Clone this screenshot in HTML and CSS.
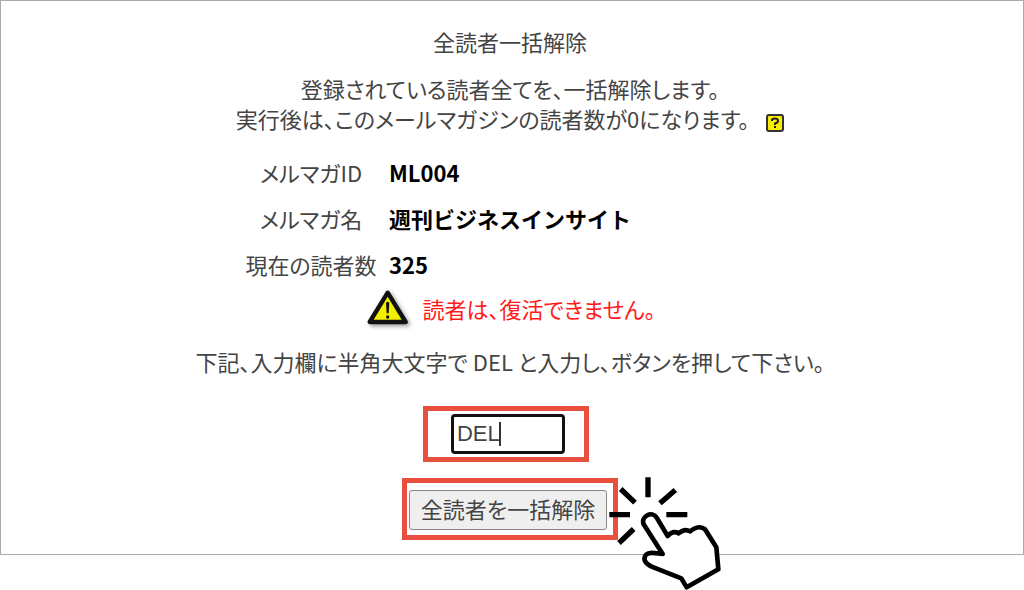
FILE: index.html
```html
<!DOCTYPE html>
<html lang="ja">
<head>
    <meta charset="UTF-8">
    <meta name="viewport" content="width=device-width, initial-scale=1.0">
    <title>全読者一括解除</title>
    <link rel="stylesheet" href="styles.css">
</head>
<body>
    <main class="panel">
        <h1 class="title">全読者一括解除</h1>
        <p class="lead">
            登録されている読者全てを、一括解除します。<br>
            実行後は、このメールマガジンの読者数が0になります。
            <a href="#" class="help" aria-label="ヘルプ">
                <svg viewBox="0 0 18 18" width="18" height="18" aria-hidden="true">
                    <rect x="1" y="1" width="16" height="16" rx="2" fill="#f8ee00" stroke="#333" stroke-width="2"/>
                    <path d="M6 7V5.500Q6.500 4.500 9 4.500T12 6.500T9 9.500V11" fill="none" stroke="#222" stroke-width="2"/>
                    <rect x="8" y="12" width="2" height="2" fill="#222"/>
                </svg>
            </a>
        </p>

        <dl class="info">
            <dt>メルマガID</dt>
            <dd>ML004</dd>
            <dt>メルマガ名</dt>
            <dd>週刊ビジネスインサイト</dd>
            <dt>現在の読者数</dt>
            <dd>325</dd>
        </dl>

        <p class="warning">
            <svg class="warning-icon" viewBox="15 12 144 126" width="48" height="42" aria-hidden="true">
                <path d="M83 29L137 117H29Z" fill="#f4ee00" stroke="#111" stroke-width="13" stroke-linejoin="round"/>
                <path d="M78 60Q83 53 88 60L86 91H80Z" fill="#111"/>
                <circle cx="83" cy="102" r="5" fill="#111"/>
            </svg>
            読者は、復活できません。
        </p>

        <form class="confirm-form">
            <label for="confirm">下記、入力欄に半角大文字で DEL と入力し、ボタンを押して下さい。</label>
            <div class="frame input-frame">
                <input type="text" id="confirm" name="confirm" value="DEL">
                <span class="caret"></span>
            </div>
            <div class="frame button-frame">
                <button type="button">全読者を一括解除</button>
                <svg class="pointer" viewBox="15 15 360 345" width="120" height="115" aria-hidden="true">
                    <path d="M144 22V82M62 57L105 98M226 60L180 100M28 134H90M199 134H262M101 177L57 219" fill="none" stroke="#000" stroke-width="16"/>
                    <path d="M131 163C121 139 157 121 170 143L203 198C211 189 223 183 236 190C246 181 259 177 270 184C284 173 302 167 315 178L349 232L355 298L260 352L244 325L155 290C133 280 129 266 138 254C149 244 169 250 188 252Z" fill="#fff" stroke="#000" stroke-width="14" stroke-linejoin="round"/>
                </svg>
            </div>
        </form>
    </main>
</body>
</html>
```

FILE: styles.css
```css
* {
    margin: 0;
    padding: 0;
    box-sizing: border-box;
}

body {
    min-height: 100vh;
    background-color: #fff;
    color: #444;
    font-family: "Noto Sans CJK JP", sans-serif;
    font-size: 22px;
    font-weight: 400;
    line-height: 30px;
}

.panel {
    display: flex;
    flex-direction: column;
    align-items: center;
    padding: 25px 8px 14px 4px;
    border: 1px solid #aaa;
    font-feature-settings: "palt";
    text-align: center;
}

.title {
    margin-bottom: 17px;
    font-size: 22px;
    font-weight: 400;
}

.lead {
    margin-bottom: 16px;
}

.help {
    display: inline-block;
    margin-left: 12px;
    line-height: 0;
    vertical-align: -4px;
}

.info {
    display: grid;
    grid-template-columns: 132px 1fr;
    column-gap: 12px;
    width: 100%;
    max-width: 530px;
    line-height: 46px;
}

.info dd {
    color: #000;
    font-weight: 700;
    font-feature-settings: normal;
    text-align: left;
}

.warning {
    display: flex;
    align-items: center;
    gap: 10px;
    margin-bottom: 17px;
    color: #ff1a1a;
}

.warning-icon {
    filter: drop-shadow(2px 2px 2px rgba(0, 0, 0, 0.4));
}

.confirm-form {
    display: flex;
    flex-direction: column;
    align-items: center;
}

.frame {
    position: relative;
    border: 5px solid #e94f3f;
}

.input-frame {
    margin: 30px 8px 16px 0;
    padding: 3px 19px 3px 23px;
}

.input-frame input {
    display: block;
    width: 114px;
    height: 40px;
    padding: 0 3px;
    border: 3px solid #111;
    border-radius: 4px;
    background-color: #fff;
    color: #444;
    font-family: "Liberation Sans", Arial, sans-serif;
    font-size: 22px;
    outline: none;
}

/* text cursor over the input */
.caret {
    position: absolute;
    top: 11px;
    left: 71px;
    width: 2px;
    height: 24px;
    background-color: #333;
}

.button-frame {
    padding: 7px 6px 5px 2px;
}

.button-frame button {
    display: block;
    height: 40px;
    padding: 0 11px 4px;
    border: 1px solid #888;
    border-radius: 3px;
    background-color: #efefef;
    color: #444;
    font: inherit;
    font-feature-settings: inherit;
    cursor: pointer;
}

.pointer {
    position: absolute;
    top: -8px;
    left: 198px;
}
```
